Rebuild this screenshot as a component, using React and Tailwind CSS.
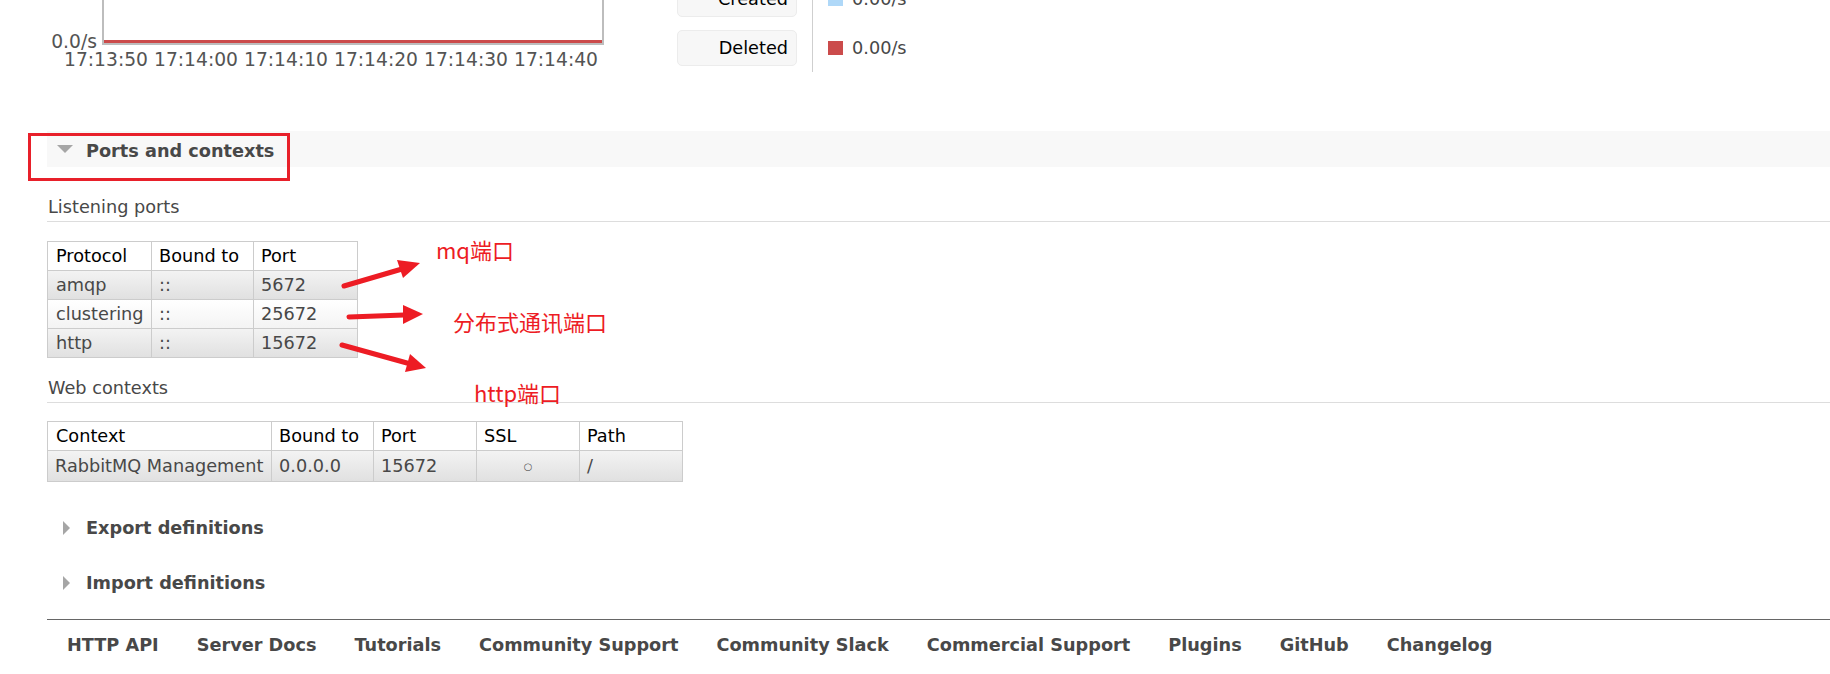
import React from 'react'

const ticks = ['17:13:50', '17:14:00', '17:14:10', '17:14:20', '17:14:30', '17:14:40']

const listening = [
  ['amqp', '::', '5672'],
  ['clustering', '::', '25672'],
  ['http', '::', '15672'],
]

const footerLinks = [
  'HTTP API',
  'Server Docs',
  'Tutorials',
  'Community Support',
  'Community Slack',
  'Commercial Support',
  'Plugins',
  'GitHub',
  'Changelog',
]

const rowAlt1 = 'bg-linear-to-b from-[#f3f3f3] to-[#e0e0e0]'
const rowAlt2 = 'bg-linear-to-b from-white to-[#f3f3f3]'

function Section({ open, title }) {
  return (
    <div className={`h-[36px] flex items-center pl-[10px] ${open ? 'bg-[#f8f8f8]' : ''}`}>
      <span className="w-[16px] flex justify-center">
        {open ? (
          <span className="w-0 h-0 border-l-[8px] border-r-[8px] border-t-[8px] border-l-transparent border-r-transparent border-t-[#a6a6a6]" />
        ) : (
          <span className="ml-[3px] w-0 h-0 border-t-[7.5px] border-b-[7.5px] border-l-[7px] border-t-transparent border-b-transparent border-l-[#a6a6a6]" />
        )}
      </span>
      <h2 className={`ml-[13px] font-bold text-[#484848] leading-[22px] ${open ? 'mt-[3px]' : ''}`}>{title}</h2>
    </div>
  )
}

function SubHeading({ children, className = '' }) {
  return (
    <h3 className={`pb-[3px] pl-px border-b border-[#dddddd] leading-[22px] text-[#484848] ${className}`}>
      {children}
    </h3>
  )
}

export default function App() {
  return (
    <div className="relative h-[674px] overflow-hidden bg-white text-[17.7px] font-['DejaVu_Sans','Verdana',sans-serif]">
      {/* top of page: message rates chart, cut off by the viewport */}
      <div className="h-[131px] overflow-hidden">
        <div className="-mt-[160px] flex items-start">
          <div className="flex flex-col">
            <div className="flex">
              <div className="relative w-[102px]">
                <span className="absolute right-[5px] bottom-[-8px] text-[18.7px] leading-[22px] text-[#545454]">0.0/s</span>
              </div>
              <div className="w-[502px] h-[205px] border-x-2 border-b-2 border-[#bdbdbd] flex flex-col justify-end">
                <div className="h-[3px] bg-[#cb4b4b]" />
              </div>
            </div>
            <div className="mt-[4px] pl-[61px] flex text-[18.7px] leading-[22px] text-[#545454]">
              {ticks.map((t) => (
                <span key={t} className="w-[90px] text-center">{t}</span>
              ))}
            </div>
          </div>

          <div className="ml-[73px] flex">
            <div className="w-[120px] pt-[141px] pb-[6px] flex flex-col gap-[13px]">
              {['Created', 'Deleted'].map((l) => (
                <div key={l} className="h-[36px] rounded-[5px] bg-[#f7f7f7] border border-[#ececec] flex items-center justify-end pr-[8px] leading-[22px] text-black">
                  {l}
                </div>
              ))}
            </div>
            <div className="ml-[15px] w-px bg-[#cfcfcf]" />
            <div className="ml-[15px] pt-[141px] flex flex-col gap-[13px]">
              {['bg-[#afd8f8]', 'bg-[#cb4b4b]'].map((c) => (
                <div key={c} className="h-[36px] flex items-center gap-[9px] text-[#484848] leading-[22px]">
                  <span className={`w-[15px] h-[14px] ${c}`} />
                  <span>0.00/s</span>
                </div>
              ))}
            </div>
          </div>
        </div>
      </div>

      <div className="pl-[47px]">
        <Section open title="Ports and contexts" />

        <SubHeading className="mt-[29px]">Listening ports</SubHeading>
        <table className="mt-[19px] w-[310px] table-fixed border-collapse">
          <thead>
            <tr className="bg-white">
              <th className="w-[104px] h-[29px] px-[8px] border border-[#cccccc] text-left font-normal text-black">Protocol</th>
              <th className="w-[102px] h-[29px] px-[7px] border border-[#cccccc] text-left font-normal text-black">Bound to</th>
              <th className="w-[104px] h-[29px] px-[7px] border border-[#cccccc] text-left font-normal text-black">Port</th>
            </tr>
          </thead>
          <tbody>
            {listening.map((r, i) => (
              <tr key={r[0]} className={i % 2 === 0 ? rowAlt1 : rowAlt2}>
                <td className="h-[29px] px-[8px] border border-[#cccccc] text-[#484848]">{r[0]}</td>
                <td className="h-[29px] px-[7px] border border-[#cccccc] text-[#484848]">{r[1]}</td>
                <td className="h-[29px] px-[7px] border border-[#cccccc] text-[#484848]">{r[2]}</td>
              </tr>
            ))}
          </tbody>
        </table>

        <SubHeading className="mt-[19px]">Web contexts</SubHeading>
        <table className="mt-[18px] w-[635px] table-fixed border-collapse">
          <thead>
            <tr className="bg-white">
              <th className="w-[224px] h-[29px] px-[8px] border border-[#cccccc] text-left font-normal text-black">Context</th>
              <th className="w-[102px] h-[29px] px-[7px] border border-[#cccccc] text-left font-normal text-black">Bound to</th>
              <th className="w-[103px] h-[29px] px-[7px] border border-[#cccccc] text-left font-normal text-black">Port</th>
              <th className="w-[103px] h-[29px] px-[7px] border border-[#cccccc] text-left font-normal text-black">SSL</th>
              <th className="w-[103px] h-[29px] px-[7px] border border-[#cccccc] text-left font-normal text-black">Path</th>
            </tr>
          </thead>
          <tbody>
            <tr className={rowAlt1}>
              <td className="h-[31px] px-[7px] border border-[#cccccc] text-[#484848] whitespace-nowrap">RabbitMQ Management</td>
              <td className="h-[31px] px-[7px] border border-[#cccccc] text-[#484848]">0.0.0.0</td>
              <td className="h-[31px] px-[7px] border border-[#cccccc] text-[#484848]">15672</td>
              <td className="h-[31px] px-[7px] border border-[#cccccc] text-center text-[10px] text-[#555]">○</td>
              <td className="h-[31px] px-[7px] border border-[#cccccc] text-[#484848]">/</td>
            </tr>
          </tbody>
        </table>

        <div className="mt-[28px]">
          <Section title="Export definitions" />
        </div>
        <div className="mt-[19px]">
          <Section title="Import definitions" />
        </div>

        <div className="mt-[18px] border-t border-[#666666] pt-[14px] pl-[20px] flex gap-[38px]">
          {footerLinks.map((l) => (
            <a key={l} className="font-bold text-[#484848] leading-[22px] whitespace-nowrap">{l}</a>
          ))}
        </div>
      </div>

      {/* screenshot annotations */}
      <div className="absolute left-[28px] top-[133px] w-[262px] h-[48px] border-[3px] border-[#e8202a]" />

      <svg className="absolute left-[330px] top-[250px] pointer-events-none" width="110" height="130" viewBox="330 250 110 130">
        <g stroke="#ed1c24" strokeWidth="5" strokeLinecap="round" fill="#ed1c24">
          <line x1="344" y1="286" x2="402" y2="269" />
          <line x1="349" y1="317" x2="404" y2="315" />
          <line x1="342" y1="345" x2="407" y2="363" />
        </g>
        <g fill="#ed1c24">
          <polygon points="420,263 403,278 397,260" />
          <polygon points="423,314 403,324 403,305" />
          <polygon points="426,368 405,372 410,354" />
        </g>
      </svg>

      <span className="absolute left-[436px] top-[238px] text-[22px] leading-none text-[#ed1c24] font-['Noto_Sans_CJK_SC',sans-serif]">mq端口</span>
      <span className="absolute left-[453px] top-[310px] text-[22px] leading-none text-[#ed1c24] font-['Noto_Sans_CJK_SC',sans-serif]">分布式通讯端口</span>
      <span className="absolute left-[474px] top-[381px] text-[22px] leading-none text-[#ed1c24] font-['Noto_Sans_CJK_SC',sans-serif]">http端口</span>
    </div>
  )
}
